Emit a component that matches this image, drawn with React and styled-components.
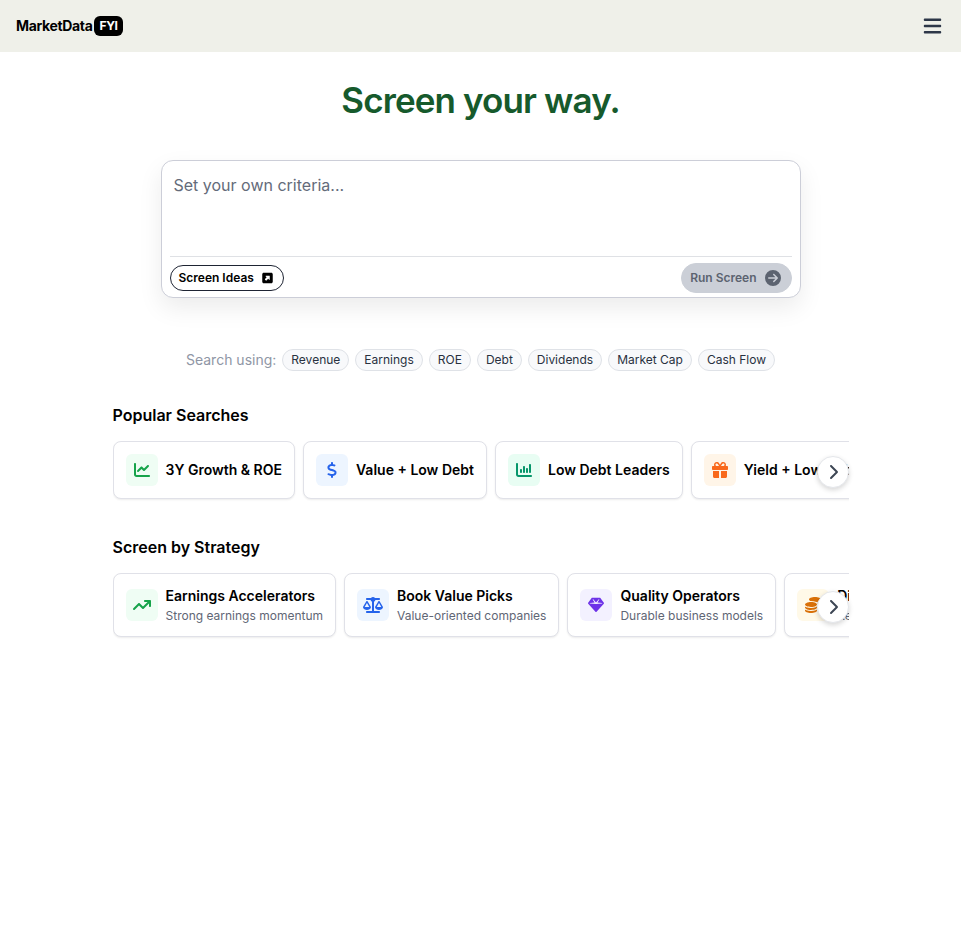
import React, { useState } from 'react'
import styled, { createGlobalStyle } from 'styled-components'
import {
  FaArrowTrendUp,
  FaBars,
  FaChartColumn,
  FaChartLine,
  FaChevronRight,
  FaCircleArrowRight,
  FaCoins,
  FaDollarSign,
  FaGem,
  FaGift,
  FaScaleBalanced,
  FaSquareUpRight
} from 'react-icons/fa6'

const GlobalStyle = createGlobalStyle`
  *, *::before, *::after {
    box-sizing: border-box;
  }

  body {
    margin: 0;
    background: #fff;
    color: #000;
    font-family: Inter, 'Liberation Sans', sans-serif;
    font-size: 16px;
    line-height: 24px;
  }

  h1, h2, p {
    margin: 0;
  }

  button, textarea {
    font: inherit;
    color: inherit;
  }

  button {
    cursor: pointer;
  }

  button svg, a svg {
    width: 1.25em;
    flex-shrink: 0;
  }
`

const Header = styled.header`
  display: flex;
  align-items: center;
  justify-content: space-between;
  padding: 16px;
  background: #eff0e9;
`

const Logo = styled.a`
  display: flex;
  align-items: center;
  gap: 2px;
  color: #000;
  font-size: 14px;
  font-weight: 700;
  line-height: 20px;
  letter-spacing: -0.025em;
  text-decoration: none;
`

const LogoBadge = styled.span`
  padding: 0 5px;
  border-radius: 6px;
  background: #000;
  color: #fff;
  font-size: 12px;
`

const MenuButton = styled.button`
  display: flex;
  padding: 0;
  border: 0;
  background: none;
  color: #2d3748;
  font-size: 20px;
`

const Main = styled.main`
  max-width: 768px;
  margin: 0 auto;
  padding: 28px 16px;
`

const Title = styled.h1`
  color: #165a2c;
  font-size: 35px;
  font-weight: 600;
  line-height: 40px;
  letter-spacing: -0.025em;
  text-align: center;
`

const ScreenForm = styled.form`
  max-width: 640px;
  margin: 40px auto 0;
  padding: 8px 8px 4px;
  border: 1px solid #ccced8;
  border-radius: 12px;
  background: #fff;
  box-shadow: 0 10px 25px rgba(0, 0, 0, 0.08);
`

const Criteria = styled.textarea`
  display: block;
  width: 100%;
  height: 87px;
  padding: 4px;
  border: 0;
  outline: 0;
  resize: none;
  background: transparent;

  &::placeholder {
    color: #646b7a;
    opacity: 1;
  }
`

const FormFooter = styled.div`
  display: flex;
  align-items: center;
  justify-content: space-between;
  padding-top: 6px;
  border-top: 1px solid #dfe1e5;
`

const PillButton = styled.button`
  display: flex;
  align-items: center;
  gap: 6px;
  padding: 4px 8px;
  border: 1px solid #1e2433;
  border-radius: 999px;
  background: #fff;
  font-size: 12px;
  font-weight: 600;
  line-height: 16px;
`

const RunButton = styled(PillButton)`
  padding: 6px 8px;
  border-color: #cbcfd7;
  background: #cbcfd7;
  color: #5c6370;

  svg {
    font-size: 16px;
  }
`

const Metrics = styled.div`
  display: flex;
  flex-wrap: wrap;
  align-items: center;
  justify-content: center;
  gap: 6px;
  margin: 51px 0 32px;
`

const MetricsLabel = styled.span`
  color: #8f96a5;
  font-size: 14px;
  line-height: 20px;
`

const Chip = styled.button`
  padding: 2px 8px;
  border: 1px solid #dfe2e7;
  border-radius: 999px;
  background: #f8f9fb;
  color: #28313f;
  font-size: 12px;
  line-height: 16px;
`

const Section = styled.section`
  & + & {
    margin-top: 32px;
  }
`

const SectionTitle = styled.h2`
  margin-bottom: 14px;
  font-size: 16px;
  font-weight: 600;
  line-height: 24px;
`

const Carousel = styled.div`
  position: relative;
`

const Track = styled.div`
  display: flex;
  gap: 8px;
  padding-bottom: 4px;
  overflow-x: auto;
  scrollbar-width: none;
`

const Card = styled.button`
  display: flex;
  flex-shrink: 0;
  align-items: center;
  gap: 8px;
  padding: 12px;
  border: 1px solid #e0e1e8;
  border-radius: 8px;
  background: #fff;
  box-shadow: 0 1px 2px rgba(0, 0, 0, 0.08);
  text-align: left;
`

const IconTile = styled.span`
  display: flex;
  align-items: center;
  justify-content: center;
  width: 32px;
  height: 32px;
  border-radius: 6px;
  background: ${(props) => props.$background};
  color: ${(props) => props.$color};
`

const CardTitle = styled.span`
  display: block;
  font-size: 14px;
  font-weight: 600;
  line-height: 20px;
`

const CardText = styled.span`
  display: block;
  margin-top: 2px;
  color: #5f6675;
  font-size: 12px;
  line-height: 16px;
`

const NextButton = styled.button`
  position: absolute;
  top: 50%;
  right: 0;
  display: flex;
  align-items: center;
  justify-content: center;
  width: 32px;
  height: 32px;
  padding: 0;
  border: 1px solid #e5e7eb;
  border-radius: 50%;
  background: #fff;
  box-shadow: 0 2px 5px rgba(0, 0, 0, 0.16);
  color: #3d4654;
  transform: translateY(-50%);
`

const metrics = ['Revenue', 'Earnings', 'ROE', 'Debt', 'Dividends', 'Market Cap', 'Cash Flow']

const searches = [
  { title: '3Y Growth & ROE', icon: FaChartLine, color: '#16a34a', background: '#effdf4' },
  { title: 'Value + Low Debt', icon: FaDollarSign, color: '#2563eb', background: '#edf5ff' },
  { title: 'Low Debt Leaders', icon: FaChartColumn, color: '#07966b', background: '#e8fdf3' },
  { title: 'Yield + Low Debt', icon: FaGift, color: '#f9691c', background: '#fff5e8' }
]

const strategies = [
  { title: 'Earnings Accelerators', text: 'Strong earnings momentum', icon: FaArrowTrendUp, color: '#16a34a', background: '#effdf4' },
  { title: 'Book Value Picks', text: 'Value-oriented companies', icon: FaScaleBalanced, color: '#2563eb', background: '#edf5ff' },
  { title: 'Quality Operators', text: 'Durable business models', icon: FaGem, color: '#6d32e8', background: '#f3f1ff' },
  { title: 'Dividend Income', text: 'Reliable cash returns', icon: FaCoins, color: '#d97008', background: '#fff9e8' }
]

const CardRow = ({ title, items, onPick }) => (
  <Section>
    <SectionTitle>{title}</SectionTitle>
    <Carousel>
      <Track>
        {items.map((item) => (
          <Card key={item.title} type="button" onClick={() => onPick(item.title)}>
            <IconTile $color={item.color} $background={item.background}>
              <item.icon />
            </IconTile>
            <span>
              <CardTitle>{item.title}</CardTitle>
              {item.text && <CardText>{item.text}</CardText>}
            </span>
          </Card>
        ))}
      </Track>
      <NextButton type="button" aria-label="Next">
        <FaChevronRight />
      </NextButton>
    </Carousel>
  </Section>
)

const App = () => {
  const [criteria, setCriteria] = useState('')

  return (
    <>
      <GlobalStyle />
      <Header>
        <Logo href="/">
          MarketData
          <LogoBadge>FYI</LogoBadge>
        </Logo>
        <MenuButton type="button" aria-label="Menu">
          <FaBars />
        </MenuButton>
      </Header>
      <Main>
        <Title>Screen your way.</Title>
        <ScreenForm onSubmit={(event) => event.preventDefault()}>
          <Criteria
            aria-label="Screen criteria"
            placeholder="Set your own criteria..."
            value={criteria}
            onChange={(event) => setCriteria(event.target.value)} />
          <FormFooter>
            <PillButton type="button">
              Screen Ideas
              <FaSquareUpRight />
            </PillButton>
            <RunButton type="submit" disabled={!criteria}>
              Run Screen
              <FaCircleArrowRight />
            </RunButton>
          </FormFooter>
        </ScreenForm>
        <Metrics>
          <MetricsLabel>Search using:</MetricsLabel>
          {metrics.map((metric) => (
            <Chip key={metric} type="button" onClick={() => setCriteria(metric)}>{metric}</Chip>
          ))}
        </Metrics>
        <CardRow title="Popular Searches" items={searches} onPick={setCriteria} />
        <CardRow title="Screen by Strategy" items={strategies} onPick={setCriteria} />
      </Main>
    </>
  )
}

export default App
